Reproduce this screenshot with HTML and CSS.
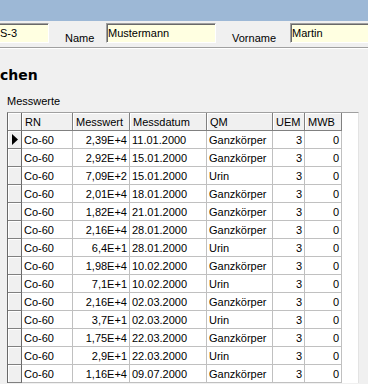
FILE: index.html
```html
<!DOCTYPE html>
<html lang="de">
<head>
  <meta charset="UTF-8" />
  <title>Messwerte</title>
  <link rel="stylesheet" href="styles.css">
</head>
<body>

  <!-- Fensterleiste -->
  <div class="titlebar"></div>

  <!-- Personendaten -->
  <div class="person">
    <div class="field field-id">S-3</div>
    <span class="label label-name">Name</span>
    <div class="field field-name">Mustermann</div>
    <span class="label label-first">Vorname</span>
    <div class="field field-first">Martin</div>
  </div>

  <!-- Messwerte -->
  <div class="panel">
    <h1 class="panel-title">chen</h1>
    <div class="grid-label">Messwerte</div>

    <div class="grid">
      <div class="row head">
        <div class="ind"></div>
        <div class="cell">RN</div>
        <div class="cell">Messwert</div>
        <div class="cell">Messdatum</div>
        <div class="cell">QM</div>
        <div class="cell">UEM</div>
        <div class="cell">MWB</div>
      </div>
      <div class="row">
        <div class="ind"><svg width="6" height="11" viewBox="0 0 6 11"><polygon points="0,0 6,5.5 0,11" fill="#000"/></svg></div>
        <div class="cell">Co-60</div><div class="cell num">2,39E+4</div><div class="cell">11.01.2000</div><div class="cell">Ganzkörper</div><div class="cell num">3</div><div class="cell num">0</div>
      </div>
      <div class="row">
        <div class="ind"></div>
        <div class="cell">Co-60</div><div class="cell num">2,92E+4</div><div class="cell">15.01.2000</div><div class="cell">Ganzkörper</div><div class="cell num">3</div><div class="cell num">0</div>
      </div>
      <div class="row">
        <div class="ind"></div>
        <div class="cell">Co-60</div><div class="cell num">7,09E+2</div><div class="cell">15.01.2000</div><div class="cell">Urin</div><div class="cell num">3</div><div class="cell num">0</div>
      </div>
      <div class="row">
        <div class="ind"></div>
        <div class="cell">Co-60</div><div class="cell num">2,01E+4</div><div class="cell">18.01.2000</div><div class="cell">Ganzkörper</div><div class="cell num">3</div><div class="cell num">0</div>
      </div>
      <div class="row">
        <div class="ind"></div>
        <div class="cell">Co-60</div><div class="cell num">1,82E+4</div><div class="cell">21.01.2000</div><div class="cell">Ganzkörper</div><div class="cell num">3</div><div class="cell num">0</div>
      </div>
      <div class="row">
        <div class="ind"></div>
        <div class="cell">Co-60</div><div class="cell num">2,16E+4</div><div class="cell">28.01.2000</div><div class="cell">Ganzkörper</div><div class="cell num">3</div><div class="cell num">0</div>
      </div>
      <div class="row">
        <div class="ind"></div>
        <div class="cell">Co-60</div><div class="cell num">6,4E+1</div><div class="cell">28.01.2000</div><div class="cell">Urin</div><div class="cell num">3</div><div class="cell num">0</div>
      </div>
      <div class="row">
        <div class="ind"></div>
        <div class="cell">Co-60</div><div class="cell num">1,98E+4</div><div class="cell">10.02.2000</div><div class="cell">Ganzkörper</div><div class="cell num">3</div><div class="cell num">0</div>
      </div>
      <div class="row">
        <div class="ind"></div>
        <div class="cell">Co-60</div><div class="cell num">7,1E+1</div><div class="cell">10.02.2000</div><div class="cell">Urin</div><div class="cell num">3</div><div class="cell num">0</div>
      </div>
      <div class="row">
        <div class="ind"></div>
        <div class="cell">Co-60</div><div class="cell num">2,16E+4</div><div class="cell">02.03.2000</div><div class="cell">Ganzkörper</div><div class="cell num">3</div><div class="cell num">0</div>
      </div>
      <div class="row">
        <div class="ind"></div>
        <div class="cell">Co-60</div><div class="cell num">3,7E+1</div><div class="cell">02.03.2000</div><div class="cell">Urin</div><div class="cell num">3</div><div class="cell num">0</div>
      </div>
      <div class="row">
        <div class="ind"></div>
        <div class="cell">Co-60</div><div class="cell num">1,75E+4</div><div class="cell">22.03.2000</div><div class="cell">Ganzkörper</div><div class="cell num">3</div><div class="cell num">0</div>
      </div>
      <div class="row">
        <div class="ind"></div>
        <div class="cell">Co-60</div><div class="cell num">2,9E+1</div><div class="cell">22.03.2000</div><div class="cell">Urin</div><div class="cell num">3</div><div class="cell num">0</div>
      </div>
      <div class="row">
        <div class="ind"></div>
        <div class="cell">Co-60</div><div class="cell num">1,16E+4</div><div class="cell">09.07.2000</div><div class="cell">Ganzkörper</div><div class="cell num">3</div><div class="cell num">0</div>
      </div>
    </div>
  </div>

</body>
</html>
```

FILE: styles.css
```css
* {
  margin: 0;
  padding: 0;
  box-sizing: border-box;
}

body {
  height: 384px;
  overflow: hidden;
  background: #f0f0f0;
  font-family: "Liberation Sans", Arial, sans-serif;
  font-size: 11px;
  color: #000;
}

/* Fensterleiste */
.titlebar {
  height: 21px;
  background: #9db8d6;
}

/* Personendaten */
.person {
  display: flex;
  height: 27px;
  border-bottom: 1px solid #a0a0a0;
  box-shadow: 0 1px 0 #fff;
}

.field {
  margin-top: 2px;
  height: 20px;
  padding: 3px 1px 0;
  line-height: 13px;
  background: #ffffe1;
  border-top: 1px solid #a0a0a0;
  border-left: 1px solid #a0a0a0;
  border-right: 1px solid #fff;
  border-bottom: 1px solid #fff;
  box-shadow: inset 1px 1px 0 #696969;
  white-space: nowrap;
}

.field-id {
  width: 49px;
  border-left: none;
  padding-left: 0;
  box-shadow: inset 0 1px 0 #696969;
}

.field-name {
  width: 110px;
}

.field-first {
  flex: 1;
  border-right: none;
}

.label {
  padding-top: 11px;
  line-height: 13px;
}

.label-name {
  width: 57px;
  padding-left: 16px;
}

.label-first {
  width: 74px;
  padding-left: 16px;
}

/* Messwerte */
.panel {
  padding-top: 18px;
}

.panel-title {
  font-family: "DejaVu Sans", Verdana, sans-serif;
  font-size: 14px;
  font-weight: bold;
  line-height: 18px;
  height: 18px;
}

.grid-label {
  margin-top: 11px;
  margin-left: 7px;
  line-height: 13px;
  height: 13px;
}

.grid {
  margin: 4px 0 0 7px;
  width: 352px;
  height: 271px;
  overflow: hidden;
  background: #fff;
  border-top: 1px solid #a0a0a0;
  border-left: 1px solid #696969;
  border-right: 1px solid #e3e3e3;
}

.row {
  display: grid;
  grid-template-columns: 14px 51px 57px 77px 66px 32px 37px;
  width: 334px;
  height: 18px;
}

.cell {
  padding: 1px 2px 0;
  line-height: 16px;
  border-right: 1px solid #c0c0c0;
  border-bottom: 1px solid #c0c0c0;
  white-space: nowrap;
  overflow: hidden;
}

.cell.num {
  text-align: right;
}

.ind {
  background: #f0f0f0;
  border-right: 1px solid #696969;
  border-bottom: 1px solid #808080;
  box-shadow: inset 1px 1px 0 #fff;
  display: flex;
  align-items: center;
  padding-left: 4px;
}

.head .cell {
  background: #f0f0f0;
  padding-left: 3px;
  border-right: 1px solid #808080;
  border-bottom: 1px solid #808080;
  box-shadow: inset 1px 1px 0 #fff;
}
```
